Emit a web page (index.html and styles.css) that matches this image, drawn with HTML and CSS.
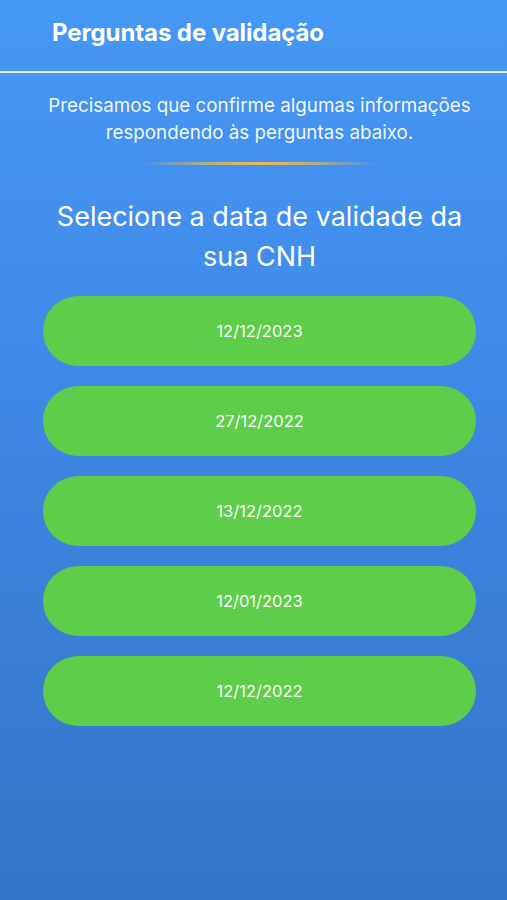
FILE: index.html
```html
<!DOCTYPE html>
<html lang="pt">
<head>
<meta charset="utf-8">
<link rel="stylesheet" href="styles.css">
</head>
<body>
<div class="screen">
  <header class="topbar">
    <h1 class="title">Perguntas de validação</h1>
  </header>
  <main class="content">
    <p class="intro">Precisamos que confirme algumas informações respondendo às perguntas abaixo.</p>
    <div class="glow"></div>
    <h2 class="question">Selecione a data de validade da sua CNH</h2>
    <div class="options">
      <button class="option">12/12/2023</button>
      <button class="option">27/12/2022</button>
      <button class="option">13/12/2022</button>
      <button class="option">12/01/2023</button>
      <button class="option">12/12/2022</button>
    </div>
  </main>
</div>
</body>
</html>
```
FILE: styles.css
```css
* { box-sizing: border-box; }
html, body { margin: 0; padding: 0; }
body {
  font-family: Inter, "Noto Sans", "Liberation Sans", sans-serif;
  color: #fff;
}
.screen {
  width: 507px;
  height: 900px;
  background: linear-gradient(180deg, #4698f5 0%, #418bea 35%, #3a7ed6 70%, #3575c8 100%);
  display: flex;
  flex-direction: column;
}
.topbar {
  height: 73px;
  border-bottom: 2px solid rgba(255,255,255,0.85);
  padding: 17px 0 0 52px;
}
.title {
  margin: 0;
  font-size: 24px;
  font-weight: 700;
  letter-spacing: -0.1px;
  line-height: 32px;
}
.content {
  display: flex;
  flex-direction: column;
  align-items: center;
  padding-top: 19px;
  padding-left: 12px;
}
.intro {
  margin: 0;
  width: 470px;
  text-align: center;
  font-size: 18.8px;
  line-height: 27px;
  color: rgba(255,255,255,0.95);
}
.glow {
  margin-top: 16px;
  width: 236px;
  height: 3px;
  border-radius: 2px;
  background: linear-gradient(90deg, rgba(240,190,80,0) 0%, rgba(240,190,80,0.7) 30%, #f2b94a 50%, rgba(240,190,80,0.7) 70%, rgba(240,190,80,0) 100%);
  filter: blur(0.6px);
}
.question {
  margin: 32px 0 0;
  width: 430px;
  text-align: center;
  font-size: 27px;
  font-weight: 400;
  line-height: 40px;
}
.options {
  margin-top: 19px;
  display: flex;
  flex-direction: column;
  gap: 20px;
}
.option {
  width: 433px;
  height: 70px;
  border: none;
  border-radius: 35px;
  background: #5dcd4a;
  color: #fff;
  font-family: Inter, "Noto Sans", "Liberation Sans", sans-serif;
  font-size: 16.5px;
  padding: 0;
}
```
